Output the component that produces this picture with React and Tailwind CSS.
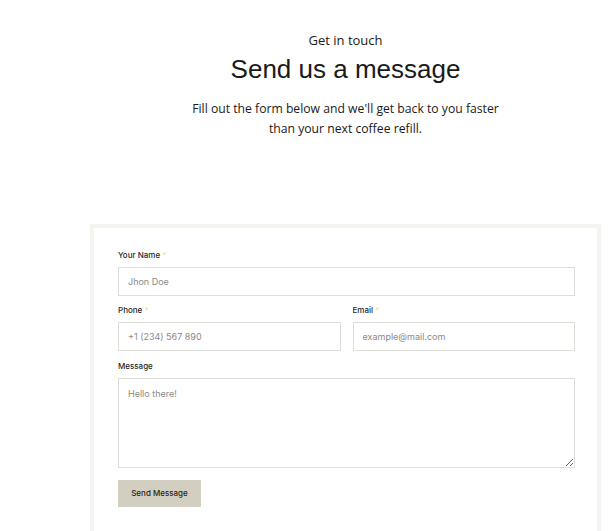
export default function App() {
  const label = "text-[8px] font-medium text-[#1f1f1f] leading-[10px] mb-[7px]";
  const input =
    "w-full h-[29px] border border-[#deded8] bg-white px-[9px] text-[9px] text-[#6b6b6b] outline-none placeholder:text-[#8a8a8a]";
  return (
    <div className="min-h-[531px] w-[613px] bg-white overflow-hidden" style={{ fontFamily: "Inter, 'Liberation Sans', sans-serif" }}>
      <div className="ml-[90px] mr-[12px]">
        <div className="flex flex-col items-center pt-[32px]">
          <div className="text-[13px] leading-[16px] text-[#1a1a1a]" style={{ fontFamily: "'Open Sans', sans-serif" }}>
            Get in touch
          </div>
          <h1 className="mt-[6px] text-[26px] leading-[30px] text-[#1a1a1a]" style={{ fontFamily: "'Liberation Sans', Arial, sans-serif" }}>
            Send us a message
          </h1>
          <p
            className="mt-[15px] text-center text-[12.2px] leading-[20px] text-[#1a1a1a] whitespace-nowrap"
            style={{ fontFamily: "'Open Sans', sans-serif" }}
          >
            Fill out the form below and we'll get back to you faster
            <br />
            than your next coffee refill.
          </p>
        </div>
        <div className="mt-[85px] border-[4px] border-b-0 border-[#f4f4f0] pl-[24px] pr-[22px] pt-[22px] pb-[24px]">
          <div className="flex flex-col">
            <div className={label}>
              Your Name <span className="text-[#f7e08a]">*</span>
            </div>
            <input className={input} defaultValue="" placeholder="Jhon Doe" />
            <div className="mt-[9px] grid grid-cols-2 gap-[12px]">
              <div className="flex flex-col">
                <div className={label}>
                  Phone <span className="text-[#f7e08a]">*</span>
                </div>
                <input className={input} placeholder="+1 (234) 567 890" />
              </div>
              <div className="flex flex-col">
                <div className={label}>
                  Email <span className="text-[#f7e08a]">*</span>
                </div>
                <input className={input} placeholder="example@mail.com" />
              </div>
            </div>
            <div className={label + " mt-[10px]"}>Message</div>
            <textarea
              className="w-full h-[90px] border border-[#deded8] bg-white px-[9px] py-[8px] text-[9px] text-[#6b6b6b] outline-none placeholder:text-[#8a8a8a] block"
              placeholder="Hello there!"
            />
            <div className="mt-[10px]">
              <button className="h-[27px] w-[83px] bg-[#d2cfc0] text-[8px] font-medium text-[#1f1f1f]">
                Send Message
              </button>
            </div>
          </div>
        </div>
      </div>
    </div>
  );
}
